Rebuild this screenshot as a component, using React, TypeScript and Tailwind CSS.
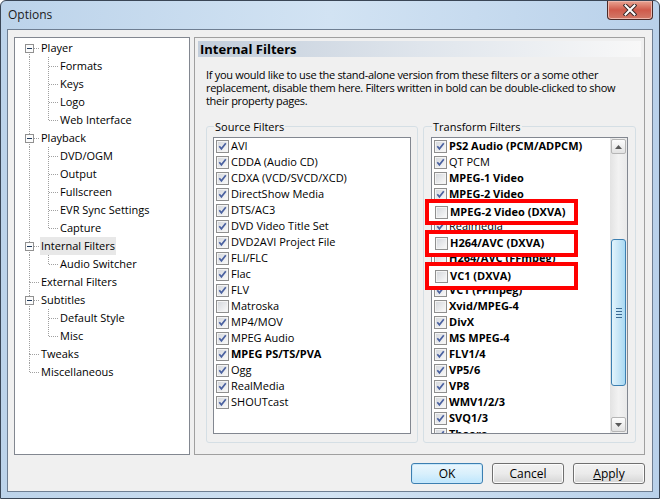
import React from 'react';

type TreeItem = { label: string; level: 0 | 1; box?: boolean; first?: boolean; last?: boolean; selected?: boolean };

const tree: TreeItem[] = [
  { label: 'Player', level: 0, box: true, first: true },
  { label: 'Formats', level: 1 },
  { label: 'Keys', level: 1 },
  { label: 'Logo', level: 1 },
  { label: 'Web Interface', level: 1, last: true },
  { label: 'Playback', level: 0, box: true },
  { label: 'DVD/OGM', level: 1 },
  { label: 'Output', level: 1 },
  { label: 'Fullscreen', level: 1 },
  { label: 'EVR Sync Settings', level: 1 },
  { label: 'Capture', level: 1, last: true },
  { label: 'Internal Filters', level: 0, box: true, selected: true },
  { label: 'Audio Switcher', level: 1, last: true },
  { label: 'External Filters', level: 0 },
  { label: 'Subtitles', level: 0, box: true },
  { label: 'Default Style', level: 1 },
  { label: 'Misc', level: 1, last: true },
  { label: 'Tweaks', level: 0 },
  { label: 'Miscellaneous', level: 0, last: true },
];

type Filter = { label: string; on: boolean; bold?: boolean };

const sourceFilters: Filter[] = [
  { label: 'AVI', on: true },
  { label: 'CDDA (Audio CD)', on: true },
  { label: 'CDXA (VCD/SVCD/XCD)', on: true },
  { label: 'DirectShow Media', on: true },
  { label: 'DTS/AC3', on: true },
  { label: 'DVD Video Title Set', on: true },
  { label: 'DVD2AVI Project File', on: true },
  { label: 'FLI/FLC', on: true },
  { label: 'Flac', on: true },
  { label: 'FLV', on: true },
  { label: 'Matroska', on: false },
  { label: 'MP4/MOV', on: true },
  { label: 'MPEG Audio', on: true },
  { label: 'MPEG PS/TS/PVA', on: true, bold: true },
  { label: 'Ogg', on: true },
  { label: 'RealMedia', on: true },
  { label: 'SHOUTcast', on: true },
];

const transformFilters: Filter[] = [
  { label: 'PS2 Audio (PCM/ADPCM)', on: true, bold: true },
  { label: 'QT PCM', on: true },
  { label: 'MPEG-1 Video', on: false, bold: true },
  { label: 'MPEG-2 Video', on: true, bold: true },
  { label: 'MPEG-2 Video (DXVA)', on: false, bold: true },
  { label: 'Realmedia', on: true },
  { label: 'H264/AVC (DXVA)', on: false, bold: true },
  { label: 'H264/AVC (FFmpeg)', on: false, bold: true },
  { label: 'VC1 (DXVA)', on: false, bold: true },
  { label: 'VC1 (FFmpeg)', on: true, bold: true },
  { label: 'Xvid/MPEG-4', on: false, bold: true },
  { label: 'DivX', on: true, bold: true },
  { label: 'MS MPEG-4', on: true, bold: true },
  { label: 'FLV1/4', on: true, bold: true },
  { label: 'VP5/6', on: true, bold: true },
  { label: 'VP8', on: true, bold: true },
  { label: 'WMV1/2/3', on: true, bold: true },
  { label: 'SVQ1/3', on: true, bold: true },
  { label: 'Theora', on: true, bold: true },
];

// red annotation boxes over the transform list: [position, filter index]
const marks: [string, number][] = [
  ['top-[198px] h-[26px]', 4],
  ['top-[229px] h-[27px]', 6],
  ['top-[261px] h-[28px]', 8],
];

const dots = { stroke: '#a0a0a0', strokeWidth: 1, strokeDasharray: '1 1', shapeRendering: 'crispEdges' as const };

function RootCell({ item }: { item: TreeItem }) {
  return (
    <svg width="19" height="18" className="shrink-0">
      {!item.first && <line x1="9.5" y1="0" x2="9.5" y2="9" {...dots} />}
      {!item.last && <line x1="9.5" y1="9" x2="9.5" y2="18" {...dots} />}
      <line x1={item.box ? 14 : 10} y1="9.5" x2="19" y2="9.5" {...dots} />
      {item.box && (
        <g shapeRendering="crispEdges">
          <rect x="5.5" y="5.5" width="8" height="8" fill="#fbfbfb" stroke="#919191" />
          <line x1="7" y1="9.5" x2="12" y2="9.5" stroke="#1e395b" />
        </g>
      )}
    </svg>
  );
}

function ChildCell({ last }: { last?: boolean }) {
  return (
    <>
      <svg width="19" height="18" className="shrink-0">
        <line x1="9.5" y1="0" x2="9.5" y2="18" {...dots} />
      </svg>
      <svg width="19" height="18" className="shrink-0">
        <line x1="9.5" y1="0" x2="9.5" y2={last ? 9 : 18} {...dots} />
        <line x1="10" y1="9.5" x2="19" y2="9.5" {...dots} />
      </svg>
    </>
  );
}

function Check({ on }: { on: boolean }) {
  return (
    <span className="flex h-[13px] w-[13px] shrink-0 border border-[#8f8f8f] bg-[#f4f4f4] p-px">
      <span className="flex h-full w-full items-center justify-center bg-gradient-to-br from-[#d6d9de] to-[#f8f8f8]">
        {on && (
          <svg width="9" height="9" viewBox="0 0 9 9">
            <path d="M1.3 4.3 L3.4 6.9 L7.8 1.3" fill="none" stroke="#4a61a0" strokeWidth="1.7" />
          </svg>
        )}
      </span>
    </span>
  );
}

function FilterRow({ f }: { f: Filter }) {
  return (
    <div className="flex h-4 shrink-0 items-center gap-[2px] whitespace-nowrap pl-[2px]">
      <Check on={f.on} />
      <span className={f.bold ? 'font-bold' : ''}>{f.label}</span>
    </div>
  );
}

function Arrow({ down }: { down?: boolean }) {
  return (
    <div className="mx-[1px] my-[1px] flex h-[15px] items-center justify-center rounded-[2px] border border-[#b5b5b5] bg-gradient-to-b from-[#fdfdfd] to-[#e2e2e2]">
      <svg width="7" height="4" viewBox="0 0 7 4">
        <path d={down ? 'M0 0 H7 L3.5 4 Z' : 'M0 4 H7 L3.5 0 Z'} fill="#5a5a5a" />
      </svg>
    </div>
  );
}

function Button({ children, primary }: { children: React.ReactNode; primary?: boolean }) {
  return (
    <button
      className={`flex h-[21px] w-[72px] items-center justify-center rounded-[3px] border text-[12px] text-black ${
        primary
          ? 'border-[#3c7fb1] bg-gradient-to-b from-[#eaf6fd] via-[#d9f0fc] to-[#bee6fd] shadow-[inset_0_0_0_1px_#c8e8fb]'
          : 'border-[#707070] bg-gradient-to-b from-[#f2f2f2] via-[#ebebeb] to-[#d5d5d5] shadow-[inset_0_0_0_1px_#fcfcfc]'
      }`}
    >
      {children}
    </button>
  );
}

export default function App() {
  return (
    <div
      className="relative flex h-[499px] w-[660px] flex-col overflow-hidden rounded-t-[6px] border border-[#3a4656] bg-gradient-to-r from-[#bcd3ea] via-[#d2e3f3] to-[#b9d1ea] text-[11px] text-black"
      style={{ fontFamily: '"Open Sans", "Liberation Sans", sans-serif' }}
    >
      {/* title bar */}
      <div className="flex h-[28px] shrink-0 items-start">
        <span className="ml-[7px] mt-[5px] text-[12px] leading-[18px] text-[#1b1b1b]">Options</span>
        <div className="ml-auto mr-[6px] flex h-[19px] w-[46px] items-center justify-center rounded-b-[4px] border border-t-0 border-[#4a2a28] bg-gradient-to-b from-[#e8a493] via-[#cf5a4b] to-[#d27a69] shadow-[inset_0_0_0_1px_#eeb7ac]">
          <svg width="14" height="12" viewBox="0 0 14 12">
            <path d="M2.5 1.5 L11.5 10.5 M11.5 1.5 L2.5 10.5" stroke="#3a2a2a" strokeWidth="4" strokeLinecap="square" />
            <path d="M2.5 1.5 L11.5 10.5 M11.5 1.5 L2.5 10.5" stroke="#ffffff" strokeWidth="2" strokeLinecap="square" />
          </svg>
        </div>
      </div>

      {/* client area */}
      <div className="mx-[6px] flex h-[463px] flex-col border border-[#6e7e92] bg-[#f0f0f0] pl-[6px] pt-[7px]">
        <div className="flex h-[418px] gap-[4px]">
          {/* page tree */}
          <div className="w-[176px] border border-[#828790] bg-white pt-[1px]">
            {tree.map((item) => (
              <div key={item.label} className="flex h-[18px] items-center pl-[5px]">
                {item.level === 0 ? <RootCell item={item} /> : <ChildCell last={item.last} />}
                <span className={`ml-px whitespace-nowrap px-[1px] leading-[18px] ${item.selected ? 'bg-[#e8e8e8]' : ''}`}>
                  {item.label}
                </span>
              </div>
            ))}
          </div>

          {/* page */}
          <div className="w-[451px] border border-[#a0a0a0] p-[3px]">
            <div className="flex h-[16px] items-center bg-gradient-to-r from-[#c3cedb] via-[#dfe5ec] to-[#f8f8f8] pl-[2px] text-[13px] font-bold leading-none">
              Internal Filters
            </div>
            <div className="pl-[8px]">
              <p className="mt-[11px] w-[426px] leading-[13px] tracking-[-0.3px]">
                If you would like to use the stand-alone version from these filters or a some other replacement, disable
                them here. Filters written in bold can be double-clicked to show their property pages.
              </p>
              <div className="mt-[13px] flex gap-[5px]">
                <fieldset className="w-[212px] rounded-[3px] border border-[#d5dfe5] px-[6px] pb-[8px]">
                  <legend className="ml-[1px] px-[1px] leading-[13px]">Source Filters</legend>
                  <div className="mt-[4px] flex h-[297px] flex-col overflow-hidden border border-[#828790] bg-white">
                    {sourceFilters.map((f) => (
                      <FilterRow key={f.label} f={f} />
                    ))}
                  </div>
                </fieldset>
                <fieldset className="w-[213px] rounded-[3px] border border-[#d5dfe5] pl-[7px] pr-[7px] pb-[8px]">
                  <legend className="ml-[1px] px-[1px] leading-[13px]">Transform Filters</legend>
                  <div className="mt-[4px] flex h-[297px] overflow-hidden border border-[#828790] bg-white">
                    <div className="flex min-w-0 flex-1 flex-col overflow-hidden">
                      {transformFilters.map((f) => (
                        <FilterRow key={f.label} f={f} />
                      ))}
                    </div>
                    <div className="flex w-[17px] shrink-0 flex-col bg-gradient-to-r from-[#e3e3e3] via-[#f2f2f2] to-[#e9e9e9]">
                      <Arrow />
                      <div className="h-[84px] shrink-0" />
                      <div className="mx-[1px] flex h-[147px] shrink-0 flex-col items-center justify-center gap-[2px] rounded-[3px] border border-[#3c7fb1] bg-gradient-to-r from-[#e3f4fc] via-[#c7e6f7] to-[#a8d9f3]">
                        <span className="h-px w-[6px] bg-[#3c6b94]" />
                        <span className="h-px w-[6px] bg-[#3c6b94]" />
                        <span className="h-px w-[6px] bg-[#3c6b94]" />
                        <span className="h-px w-[6px] bg-[#3c6b94]" />
                      </div>
                      <div className="flex-1" />
                      <Arrow down />
                    </div>
                  </div>
                </fieldset>
              </div>
            </div>
          </div>
        </div>

        {/* dialog buttons */}
        <div className="mt-[8px] flex w-[631px] justify-end gap-[9px]">
          <Button primary>OK</Button>
          <Button>Cancel</Button>
          <Button>
            <span>
              <span className="underline">A</span>pply
            </span>
          </Button>
        </div>
      </div>

      {/* red annotation boxes */}
      {marks.map(([pos, idx]) => (
        <div
          key={idx}
          className={`absolute left-[424px] flex w-[153px] items-center border-[4px] border-[#ff0000] bg-white pl-[4px] ${pos}`}
        >
          <FilterRow f={transformFilters[idx]} />
        </div>
      ))}
    </div>
  );
}
